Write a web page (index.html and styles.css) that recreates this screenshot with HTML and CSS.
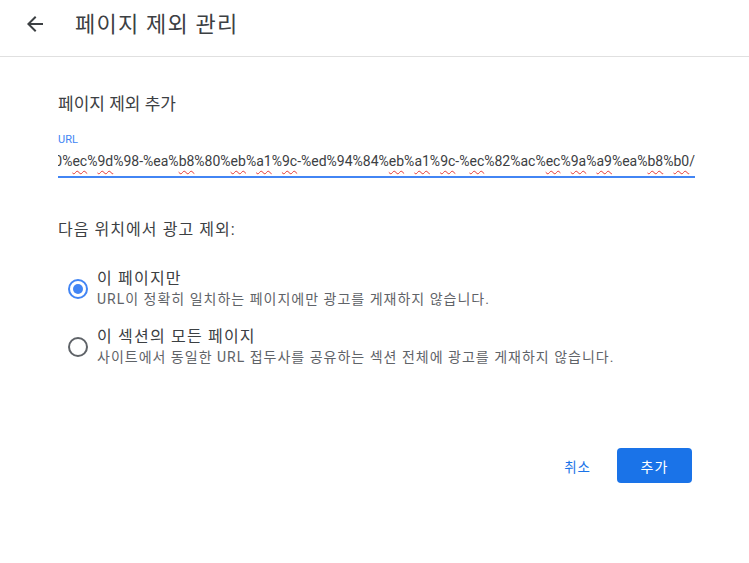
FILE: index.html
```html
<!DOCTYPE html>
<html lang="ko">
<head>
    <meta charset="UTF-8">
    <meta name="viewport" content="width=device-width, initial-scale=1.0">
    <title>페이지 제외 관리</title>
    <link rel="stylesheet" href="styles.css">
</head>
<body>
    <header class="top-bar">
        <span class="back">
            <svg width="24" height="24" viewBox="0 0 24 24"><path d="M20 11H7.83l5.59-5.59L12 4l-8 8 8 8 1.41-1.41L7.83 13H20v-2z" fill="#3c4043"/></svg>
        </span>
        <h1>페이지 제외 관리</h1>
    </header>

    <main class="content">
        <h2>페이지 제외 추가</h2>

        <div class="field">
            <label>URL</label>
            <div class="field-input">
                <span class="url">0%<s>ec</s>%<s>9d</s>%98-%ea%<s>b8</s>%80%<s>eb</s>%<s>a1</s>%<s>9c</s>-%ed%94%84%<s>eb</s>%<s>a1</s>%<s>9c</s>-%<s>ec</s>%82%ac%<s>ec</s>%<s>9a</s>%<s>a9</s>%ea%<s>b8</s>%<s>b0</s>/</span>
            </div>
        </div>

        <p class="question">다음 위치에서 광고 제외:</p>

        <div class="options">
            <div class="option">
                <span class="radio checked"></span>
                <div class="option-text">
                    <div class="option-title">이 페이지만</div>
                    <div class="option-desc">URL이 정확히 일치하는 페이지에만 광고를 게재하지 않습니다.</div>
                </div>
            </div>
            <div class="option">
                <span class="radio"></span>
                <div class="option-text">
                    <div class="option-title">이 섹션의 모든 페이지</div>
                    <div class="option-desc">사이트에서 동일한 URL 접두사를 공유하는 섹션 전체에 광고를 게재하지 않습니다.</div>
                </div>
            </div>
        </div>

        <div class="actions">
            <button class="btn-text">취소</button>
            <button class="btn-primary">추가</button>
        </div>
    </main>
</body>
</html>
```

FILE: styles.css
```css
body {
    margin: 0;
    font-family: Roboto, "Noto Sans CJK KR", sans-serif;
    background: #fff;
    color: #3c4043;
}
.top-bar {
    height: 57px;
    display: flex;
    align-items: center;
    border-bottom: 1px solid #e0e0e0;
    box-sizing: border-box;
}
.back {
    display: flex;
    margin-left: 23px;
    margin-top: -8px;
}
.top-bar h1 {
    margin: -13px 0 0 28px;
    font-size: 22px;
    font-weight: 400;
    letter-spacing: 1.2px;
    color: #3c4043;
}
.content {
    padding: 34px 54px 0 58px;
}
.content h2 {
    margin: 0;
    font-size: 17px;
    font-weight: 400;
    line-height: 26px;
    color: #3c4043;
}
.field {
    margin-top: 16px;
}
.field label {
    display: block;
    font-size: 11px;
    color: #4285f4;
    line-height: 14px;
}
.field-input {
    display: flex;
    justify-content: flex-end;
    overflow: hidden;
    white-space: nowrap;
    margin-top: 4px;
    padding-bottom: 5px;
    border-bottom: 2px solid #4285f4;
}
.url {
    font-size: 14px;
    line-height: 20px;
    color: #3c4043;
}
.url s {
    text-decoration: underline wavy #e53935;
    text-decoration-thickness: 1px;
    text-underline-offset: 4px;
}
.question {
    margin: 41px 0 0;
    font-size: 16px;
    letter-spacing: 1.05px;
    line-height: 22px;
}
.options {
    margin-top: 28px;
    display: flex;
    flex-direction: column;
    gap: 18px;
}
.option {
    display: flex;
    align-items: center;
    gap: 9px;
    padding-left: 10px;
}
.radio {
    width: 16px;
    height: 16px;
    border: 2px solid #5f6368;
    border-radius: 50%;
    position: relative;
    flex: none;
}
.radio.checked {
    border-color: #4285f4;
}
.radio.checked::after {
    content: "";
    position: absolute;
    left: 3px;
    top: 3px;
    width: 10px;
    height: 10px;
    border-radius: 50%;
    background: #4285f4;
}
.option-title {
    font-size: 16px;
    letter-spacing: 1.2px;
    line-height: 20px;
    color: #3c4043;
}
.option-desc {
    font-size: 14px;
    letter-spacing: 1px;
    line-height: 20px;
    color: #5f6368;
}
.actions {
    display: flex;
    justify-content: flex-end;
    align-items: center;
    gap: 26px;
    margin-top: 81px;
    padding-right: 3px;
}
.btn-text {
    background: none;
    border: none;
    color: #1a73e8;
    font-family: inherit;
    font-size: 13.5px;
    letter-spacing: 1px;
    padding: 0;
}
.btn-primary {
    background: #1a73e8;
    color: #fff;
    border: none;
    border-radius: 4px;
    width: 75px;
    height: 35px;
    font-family: inherit;
    font-size: 14px;
    letter-spacing: 1px;
}
```
